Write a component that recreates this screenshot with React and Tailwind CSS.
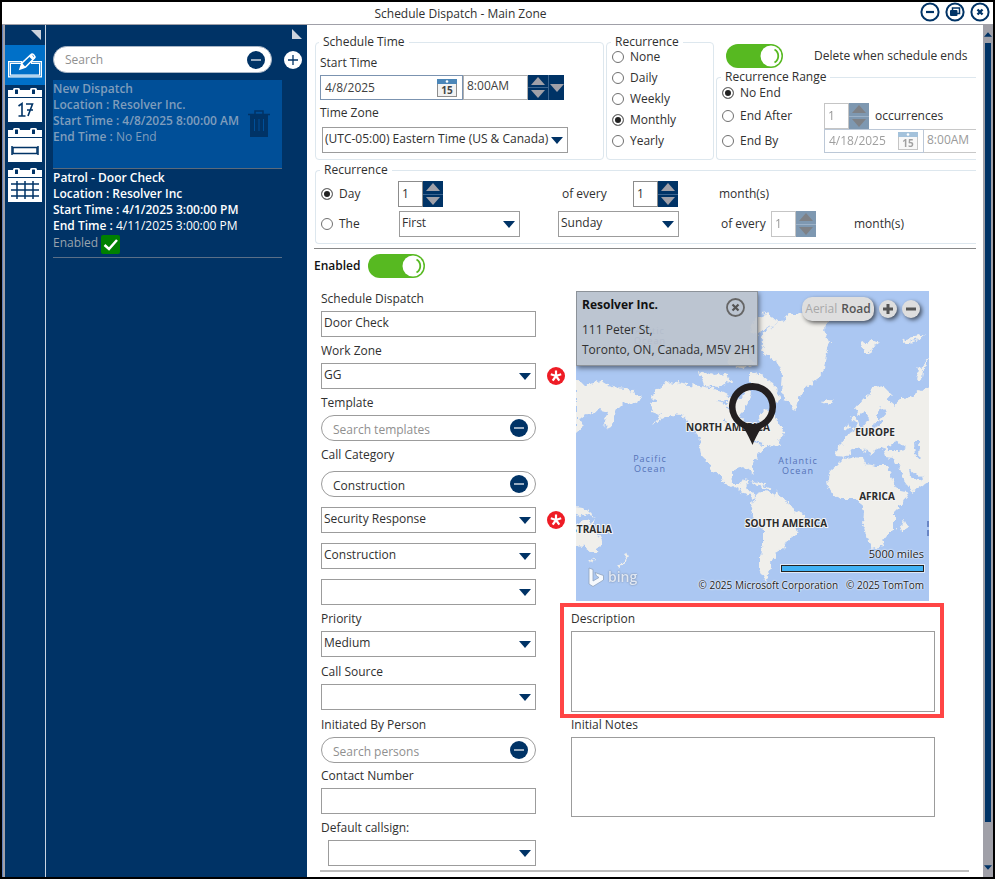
import React, { useId } from "react";

function Triangle({ dir = "down", className = "" }) {
  return (
    <svg viewBox="0 0 14 8" className={className} aria-hidden="true">
      <path d={dir === "down" ? "M0 0H14L7 8Z" : "M0 8H14L7 0Z"} fill="currentColor" />
    </svg>
  );
}

function Select({ label, id, value = "", className = "" }) {
  return (
    <div className={`relative h-[26px] ${className}`}>
      <select
        id={id}
        aria-label={label}
        defaultValue={value}
        className="h-full w-full appearance-none border border-[#9c9c9c] bg-white pr-[14px] pb-[3px] pl-[2px] text-[#303030] outline-none"
      >
        <option value={value}>{value}</option>
      </select>
      <Triangle className="pointer-events-none absolute top-[10px] right-[5px] h-[7px] w-[12px] text-[#003366]" />
    </div>
  );
}

function Spinner({ label, disabled = false }) {
  return (
    <div className={`flex h-[26px] w-[45px] shrink-0 ${disabled ? "opacity-50" : ""}`}>
      <input
        aria-label={label}
        defaultValue="1"
        disabled={disabled}
        className="w-[25px] border border-[#8c8c8c] bg-white pl-[3px] text-[#303030] outline-none"
      />
      <SpinButtons label={label} disabled={disabled} />
    </div>
  );
}

function SpinButtons({ label, disabled = false }) {
  const tone = disabled ? "bg-[#003366] text-[#a0a0a8]" : "bg-[#003366] text-[#a0a0a8]";
  const arrow = disabled ? "text-[#00060f]" : "text-[#a0a0a8]";
  return (
    <div className={`flex w-5 flex-col items-center ${tone}`}>
      <button type="button" disabled={disabled} aria-label={`Increase ${label}`} className="flex flex-1 items-center">
        <Triangle dir="up" className={`h-2 w-4 ${arrow}`} />
      </button>
      <span className="h-px w-full bg-[#3c6590]" />
      <button type="button" disabled={disabled} aria-label={`Decrease ${label}`} className="flex flex-1 items-center">
        <Triangle className={`h-2 w-4 ${arrow}`} />
      </button>
    </div>
  );
}

function CalendarGlyph() {
  return (
    <svg viewBox="0 0 20 18" className="h-[18px] w-5 shrink-0" aria-hidden="true">
      <rect x=".5" y=".5" width="19" height="17" fill="#f2f2f2" stroke="#8d8d8d" />
      <rect x="0" y="0" width="20" height="5" fill="#4b86b8" />
      <circle cx="10" cy="2.500" r="1.300" fill="#fff" />
      <text x="10" y="15" textAnchor="middle" fontFamily="Open Sans" fontWeight="700" fontSize="10" fill="#444">15</text>
    </svg>
  );
}

function DateBox({ label, value, disabled = false, className = "" }) {
  return (
    <div className={`flex items-center border border-[#7b93b0] bg-white pr-[5px] pl-1 ${disabled ? "opacity-50" : ""} ${className}`}>
      <input aria-label={label} defaultValue={value} disabled={disabled} className="w-0 min-w-0 flex-1 bg-transparent text-[#404040] outline-none" />
      <button type="button" disabled={disabled} aria-label={`Pick ${label}`}>
        <CalendarGlyph />
      </button>
    </div>
  );
}

function Radio({ name, label, checked = false, className = "" }) {
  return (
    <label className={`flex items-center gap-[6px] ${className}`}>
      <input
        type="radio"
        name={name}
        defaultChecked={checked}
        className="m-0 size-3 shrink-0 appearance-none rounded-full border border-[#707070] bg-white checked:bg-[#222222] checked:shadow-[inset_0_0_0_2px_#fff]"
      />
      {label}
    </label>
  );
}

function Toggle({ label }) {
  return (
    <button type="button" role="switch" aria-checked="true" aria-label={label} className="h-6 w-[57px] shrink-0">
      <svg viewBox="0 0 57 24" className="h-6 w-[57px]" aria-hidden="true">
        <rect width="57" height="24" rx="12" fill="#57b921" />
        <circle cx="45" cy="12" r="10.500" fill="#fff" />
        <path d="M48.500 5.500a7.500 7.500 0 0 1 0 13" fill="none" stroke="#57b921" strokeWidth="1.800" />
      </svg>
    </button>
  );
}

function MinusCircle({ label }) {
  return (
    <button type="button" aria-label={label} className="size-[18px] shrink-0">
      <svg viewBox="0 0 18 18" className="size-[18px]" aria-hidden="true">
        <circle cx="9" cy="9" r="9" fill="#003366" />
        <path d="M4 9H14" stroke="#fff" strokeWidth="1.200" />
      </svg>
    </button>
  );
}

function SearchPill({ id, value, placeholder, className = "" }) {
  return (
    <div className={`flex h-[26px] items-center rounded-full border border-[#9c9c9c] bg-white pr-[7px] pl-[11px] ${className}`}>
      <input
        id={id}
        defaultValue={value}
        placeholder={placeholder}
        className="min-w-0 flex-1 bg-transparent pt-[3px] text-[#303030] outline-none placeholder:text-[#8f8f8f]"
      />
      <MinusCircle label="Clear" />
    </div>
  );
}

function Required() {
  return (
    <svg viewBox="0 0 18 18" className="absolute top-1 left-full ml-[11px] size-[18px]" role="img" aria-label="Required">
      <circle cx="9" cy="9" r="9" fill="#ee1c25" />
      <path d="M9 9V3.500M9 9L14.200 7.300M9 9L12.300 13.600M9 9L5.700 13.600M9 9L3.800 7.300" stroke="#fff" strokeWidth="2.200" />
    </svg>
  );
}

function Field({ label, className = "", children }) {
  const id = useId();
  return (
    <div className={className}>
      <label htmlFor={id} className="block leading-4">{label}</label>
      {children(id)}
    </div>
  );
}

function NavButton({ label, active = false, children }) {
  return (
    <button
      type="button"
      aria-label={label}
      className={`flex h-10 w-full items-center justify-center ${active ? "bg-[#0070c8]" : ""}`}
    >
      {children}
    </button>
  );
}

function CalendarIcon({ children }) {
  return (
    <svg viewBox="0 0 34 34" className="size-[34px]" aria-hidden="true">
      <rect x="0" y="2" width="34" height="7" fill="#fff" />
      <rect x="5" y="0" width="7" height="8" rx="1.500" fill="#fff" />
      <rect x="7" y="1.500" width="3" height="4.500" rx=".5" fill="#003366" />
      <rect x="22" y="0" width="7" height="8" rx="1.500" fill="#fff" />
      <rect x="24" y="1.500" width="3" height="4.500" rx=".5" fill="#003366" />
      <rect x="0" y="10" width="34" height="24" fill="#fff" />
      {children}
    </svg>
  );
}

function NavRail() {
  return (
    <nav className="flex w-[41px] shrink-0 flex-col border-r border-[#c8d4e2] bg-[#003366]">
      <button type="button" aria-label="Collapse menu" className="flex h-5 items-center justify-end pr-1">
        <svg viewBox="0 0 10 10" className="size-[10px]"><path d="M0 0H10V10Z" fill="#ccd3dd" /></svg>
      </button>
      <NavButton label="Edit schedule" active>
        <svg viewBox="0 0 36 26" className="h-[26px] w-9" aria-hidden="true">
          <path d="M15 10.500H2.500V24H33.500V10.500H24" fill="none" stroke="#fff" strokeWidth="3" />
          <path d="M14 10.500H2.500V24H33.500V10.500H25" fill="none" stroke="#0070c8" strokeWidth=".6" />
          <path d="M13 17L15 11L24 2.500C25.500 1 29 4 27.500 6L18.500 15Z" fill="#0070c8" stroke="#fff" strokeWidth="1.500" />
          <path d="M13 17L15 11L18.500 15ZM22 4.500L25.500 8L27.500 6L24.500 2Z" fill="#fff" />
        </svg>
      </NavButton>
      <NavButton label="Day view">
        <CalendarIcon>
          <path d="M10.500 18L14 15.500V28M10.500 28H17.500M18 16H24.500L20 28M19 22H25" fill="none" stroke="#003366" strokeWidth="1.600" />
        </CalendarIcon>
      </NavButton>
      <NavButton label="Week view">
        <CalendarIcon>
          <rect x="5" y="19.500" width="24" height="6" fill="none" stroke="#003366" strokeWidth="1.500" />
          <path d="M4 18V27M30 18V27" stroke="#003366" strokeWidth="1.500" />
        </CalendarIcon>
      </NavButton>
      <NavButton label="Month view">
        <CalendarIcon>
          <path d="M3 16H31M3 22H31M3 28H31M9 13V31M17 13V31M25 13V31" stroke="#003366" strokeWidth="1.500" />
        </CalendarIcon>
      </NavButton>
    </nav>
  );
}

function ScheduleList() {
  return (
    <aside className="w-[261px] shrink-0 bg-[#003366] pr-[5px] pl-[7px] text-[12px] leading-4">
      <div className="flex h-[21px] justify-end pt-1">
        <svg viewBox="0 0 10 10" className="size-[10px]" aria-hidden="true"><path d="M0 0V10H10Z" fill="#ccd3dd" /></svg>
      </div>
      <div className="flex items-center gap-3">
        <div className="flex h-[27px] w-[220px] items-center rounded-full border border-[#a9b6c6] bg-white pr-[6px] pl-[11px]">
          <input aria-label="Search schedules" placeholder="Search" className="min-w-0 flex-1 bg-transparent outline-none placeholder:text-[#8f8f8f]" />
          <MinusCircle label="Clear search" />
        </div>
        <button type="button" aria-label="Add schedule">
          <svg viewBox="0 0 18 18" className="size-[18px]" aria-hidden="true">
            <circle cx="9" cy="9" r="9" fill="#fff" />
            <path d="M4 9H14M9 4V14" stroke="#003366" strokeWidth="1.300" />
          </svg>
        </button>
      </div>
      <ul className="mt-[7px] w-[229px]">
        <li className="flex h-[89px] border-b border-[#5a6a7c] bg-[#004f98] font-semibold text-[#7f9dbc]">
          <div className="w-[195px] shrink-0 whitespace-nowrap pt-px">
            <p>New Dispatch</p>
            <p>Location : Resolver Inc.</p>
            <p>Start Time : 4/8/2025 8:00:00 AM</p>
            <p>End Time : <span className="font-normal">No End</span></p>
          </div>
          <button type="button" aria-label="Delete dispatch" className="mt-[30px] h-[27px] w-[22px]">
            <svg viewBox="0 0 22 27" className="h-[27px] w-[22px]" aria-hidden="true">
              <path d="M0 4.500H22M7 4V1H15V4" fill="none" stroke="#003366" strokeWidth="1.500" />
              <path d="M2 4H20V27H2Z" fill="#003366" />
              <path d="M6.500 9V21M11 9V21M15.500 9V21" stroke="#004f98" strokeWidth="1" />
            </svg>
          </button>
        </li>
        <li className="h-[89px] border-b border-[#5a6f87] pt-px font-semibold whitespace-nowrap text-white">
          <p>Patrol - Door Check</p>
          <p>Location : Resolver Inc</p>
          <p>Start Time : 4/1/2025 3:00:00 PM</p>
          <p>End Time : <span className="font-normal">4/11/2025 3:00:00 PM</span></p>
          <p className="flex items-start gap-[3px] pt-px font-normal text-[#99a3ad]">
            Enabled
            <svg viewBox="0 0 19 19" className="size-[19px]" role="img" aria-label="Yes">
              <rect width="19" height="19" rx="2" fill="#008000" />
              <path d="M3.500 10L8 14L16 5" fill="none" stroke="#fff" strokeWidth="2.500" />
            </svg>
          </p>
        </li>
      </ul>
    </aside>
  );
}

const land = [
  "M0 90L10 94L26 90L36 96L50 97L65 105L61 113L48 112L42 118L36 130L31 140L28 132L32 120L24 118L12 124L2 128L8 134L0 141Z",
  "M74 114L80 111L76 104L83 95L95 91L112 94L124 95L138 98L150 104L160 108L170 104L171 96L176 104L173 110L168 118L164 124L168 131L177 135L182 144L184 134L183 124L190 117L197 124L204 134L209 143L202 149L205 155L196 154L187 158L182 164L178 170L175 176L178 184L173 180L168 176L159 179L155 185L157 193L164 193L167 188L173 189L170 196L175 202L181 204L177 207L169 203L160 198L150 193L144 184L138 180L131 171L125 163L123 154L124 147L118 139L114 131L104 124L96 123L86 128L76 134L84 124L76 121Z",
  "M181 204L187 200L196 201L207 208L215 214L218 219L229 223L228 231L222 235L219 245L212 250L207 258L200 262L201 267L194 271L196 276L190 285L192 291L188 288L184 279L184 264L187 252L187 239L179 230L174 219L177 210Z",
  "M187 62L188 52L184 47L192 38L202 32L214 24L240 22L254 30L248 38L254 52L250 64L248 78L241 88L229 98L223 108L220 119L214 115L208 105L205 94L206 83L200 70Z",
  "M181 24L190 22L202 32L190 38L182 44L174 40Z",
  "M123 80L138 84L150 82L155 90L143 97L128 95Z",
  "M174 80L186 84L198 94L204 105L200 113L192 108L186 98L174 94Z",
  "M150 60L172 64L180 73L164 78L152 74Z",
  "M246 110L252 107L257 110L252 115Z",
  "M353 95L344 99L335 106L326 107L318 114L312 109L316 104L307 95L298 97L287 108L279 118L282 124L290 119L293 127L288 134L280 138L272 143L269 149L264 155L260 158L261 165L270 166L275 159L282 156L288 162L290 157L296 165L299 160L306 157L309 166L318 167L322 175L329 190L337 201L348 193L358 186L358 95Z",
  "M254 180L261 174L266 169L277 166L286 167L290 173L300 175L311 175L315 186L323 200L332 201L326 213L318 221L318 238L310 246L304 256L297 258L291 247L287 233L288 220L285 212L278 208L266 208L258 205L252 197L251 188Z",
  "M324 242L322 235L329 230L331 234L327 243Z",
  "M276 139L280 135L276 125L281 128L284 136L281 141Z",
  "M269 137L273 131L275 138Z",
  "M-4 235L5 231L10 229L14 233L17 228L20 240L25 250L22 261L17 262L10 256L-4 255Z",
  "M-4 216L9 217L14 222L20 226L10 223L4 225L-4 222Z",
  "M14 267L18 268L16 272Z",
  "M51 261L53 266L44 277L41 276L49 269Z",
  "M286 52L296 49L303 52L297 56L293 65L288 62Z",
  "M340 89L342 78L353 68L346 80L345 90Z",
  "M326 49L334 47L350 43L344 48L330 52Z",
];

const waters = [
  "M301 124L305 116L310 121L303 129L307 132L297 137L296 134L302 131Z",
  "M311 156L321 150L330 156L323 160L312 160Z",
  "M338 151L344 151L342 162L345 168L339 165Z",
  "M314 177L318 184L327 199L323 199L317 190Z",
  "M333 177L342 185L348 186L342 190L334 184Z",
  "M312 201L316 201L316 207L312 206Z",
];

function WorldMap() {
  return (
    <svg viewBox="0 0 353 310" preserveAspectRatio="xMidYMid slice" className="h-full w-full" role="img" aria-label="World map">
      <defs>
        <filter id="coast" x="-5%" y="-5%" width="110%" height="110%">
          <feTurbulence type="fractalNoise" baseFrequency="0.18" numOctaves="3" seed="4" result="noise" />
          <feDisplacementMap in="SourceGraphic" in2="noise" scale="8" xChannelSelector="R" yChannelSelector="G" />
        </filter>
      </defs>
      <rect width="353" height="310" fill="#abc7f2" />
      <g filter="url(#coast)">
        {land.map((d) => <path key={d} d={d} fill="#f0efeb" />)}
        {waters.map((d) => <path key={d} d={d} fill="#abc7f2" />)}
        <path d="M177 191L188 195L194 198M200 200L202 206" stroke="#f0efeb" strokeWidth="2" fill="none" />
        <path d="M150 116L158 121M142 109L150 111M147 128L153 136M176 151L188 153" stroke="#abc7f2" strokeWidth="2" fill="none" />
      </g>
      <g fontFamily="Open Sans, Noto Sans, sans-serif" textAnchor="middle">
        <g fontSize="10" fontWeight="700" fill="#2b2b2b" stroke="#f4f4f4" strokeWidth="2" paintOrder="stroke" strokeLinejoin="round">
          <text x="152" y="140">NORTH AMERICA</text>
          <text x="299" y="145">EUROPE</text>
          <text x="301" y="209">AFRICA</text>
          <text x="210" y="236">SOUTH AMERICA</text>
          <text x="36" y="242" textAnchor="end">STRALIA</text>
        </g>
        <g fontSize="9" fill="#5573b8" letterSpacing="1">
          <text x="74" y="171">Pacific</text>
          <text x="74" y="181">Ocean</text>
          <text x="222" y="173">Atlantic</text>
          <text x="222" y="183">Ocean</text>
          <text x="74" y="43">Arctic</text>
          <text x="74" y="53">Ocean</text>
        </g>
      </g>
      <path d="M352 230V236M352 239V245" stroke="#5573b8" strokeWidth="1.500" />
      <path
        fillRule="evenodd"
        fill="#231f20"
        d="M176.500 92A23.500 23.500 0 0 1 186 137C183 140 180 146 176.500 154C173 146 170 140 167 137A23.500 23.500 0 0 1 176.500 92ZM176.500 99A17 17 0 1 0 176.500 133A17 17 0 1 0 176.500 99Z"
      />
    </svg>
  );
}

function MapPanel() {
  return (
    <section aria-label="Location map" className="relative mr-[6px] ml-[5px] h-[310px] overflow-hidden">
      <WorldMap />
      <div className="absolute top-0 left-0 h-[75px] w-[182px] border border-[#8c9299] bg-[#bec4cd]/90 pl-[5px] shadow-[1px_2px_5px_rgba(0,0,0,.5)]">
        <h2 className="mt-[5px] leading-4 font-bold text-[#111]">Resolver Inc.</h2>
        <p className="mt-[7px] leading-5 whitespace-nowrap">111 Peter St,<br />Toronto, ON, Canada, M5V 2H1</p>
        <button type="button" aria-label="Close" className="absolute top-[6px] right-[12px] size-[19px]">
          <svg viewBox="0 0 19 19" aria-hidden="true">
            <circle cx="9.500" cy="9.500" r="8.500" fill="none" stroke="#666" strokeWidth="1.800" />
            <path d="M6.500 6.500L12.500 12.500M12.500 6.500L6.500 12.500" stroke="#555" strokeWidth="2.200" />
          </svg>
        </button>
      </div>
      <div className="absolute top-[6px] right-[9px] flex items-center gap-[5px]">
        <div className="flex h-6 w-[72px] items-center justify-center gap-1 rounded-[10px] bg-[#dedede] shadow-[2px_2px_4px_rgba(0,0,0,.6)]">
          <button type="button" className="text-[#a8a8a8]">Aerial</button>
          <button type="button" className="font-semibold text-[#555]">Road</button>
        </div>
        {["M9 4V14M4 9H14", "M4 9H14"].map((d, i) => (
          <button key={d} type="button" aria-label={i ? "Zoom out" : "Zoom in"} className="size-[18px] rounded-full bg-[#dedede] shadow-[2px_2px_4px_rgba(0,0,0,.6)]">
            <svg viewBox="0 0 18 18" aria-hidden="true"><path d={d} stroke="#555" strokeWidth="3" /></svg>
          </button>
        ))}
      </div>
      <div className="absolute bottom-[14px] left-[12px] flex items-center gap-[3px] opacity-90">
        <svg viewBox="0 0 17 20" className="h-5 w-[17px]" aria-hidden="true">
          <path d="M1 1L5 2.500V14L11 10.500L8.500 9L7 5.500L15.500 8.500V13L5 19.500L1 17Z" fill="#fff" stroke="#8d9fb8" strokeWidth=".8" />
        </svg>
        <span className="text-[14px] leading-5 font-semibold text-[#e6ebf3] [text-shadow:0_0_2px_#60708a]">bing</span>
      </div>
      <div className="absolute right-[5px] bottom-[8px] flex flex-col items-end text-[#222] [text-shadow:0_0_2px_#fff,0_0_2px_#fff]">
        <span className="text-[11px] leading-4">5000 miles</span>
        <span className="mt-[3px] h-[7px] w-[143px] border border-[#222] bg-[#41b2f5] outline outline-[#dfe9f7]" />
        <span className="mt-[5px] flex gap-[8px] text-[10px] leading-4 whitespace-nowrap">
          <span>© 2025 Microsoft Corporation</span>
          <span>© 2025 TomTom</span>
        </span>
      </div>
    </section>
  );
}

const group = "min-w-0 rounded border border-[#dde7ee]";
const legend = "-ml-px h-4 px-1 leading-4";

function Timing() {
  return (
    <>
      <div className="flex gap-[2px] pl-px">
        <fieldset className={`${group} w-[289px] shrink-0 pb-[6px] pl-1`}>
          <legend className={legend}>Schedule Time</legend>
          <p className="mt-[5px] leading-4">Start Time</p>
          <div className="mt-1 flex h-[25px]">
            <DateBox label="start date" value="4/8/2025" className="w-[143px]" />
            <input aria-label="Start hour" defaultValue="8:00AM" className="w-[65px] border border-[#b0b0b0] pb-1 pl-[3px] text-[#404040] outline-none" />
            <SpinButtons label="start hour" />
            <button type="button" aria-label="Choose start hour" className="flex w-4 items-center justify-center border-l border-[#3c6590] bg-[#003366] text-[#a0a0a8]">
              <Triangle className="h-2 w-[14px]" />
            </button>
          </div>
          <label htmlFor="zone" className="mt-[5px] block leading-4">Time Zone</label>
          <Select id="zone" value="(UTC-05:00) Eastern Time (US & Canada)" className="mt-[6px] ml-[2px] w-[246px]" />
        </fieldset>
        <fieldset className={`${group} w-[108px] shrink-0 pl-[5px]`}>
          <legend className={legend}>Recurrence</legend>
          <div className="-mt-1">
            {["None", "Daily", "Weekly", "Monthly", "Yearly"].map((item) => (
              <Radio key={item} name="pattern" label={item} checked={item === "Monthly"} className="h-[21px]" />
            ))}
          </div>
        </fieldset>
        <div className="flex min-w-0 flex-1 flex-col">
          <div className="flex h-[35px] items-end gap-[31px] pb-px pl-[10px]">
            <Toggle label="Delete when schedule ends" />
            <span className="leading-6 whitespace-nowrap">Delete when schedule ends</span>
          </div>
          <fieldset className={`${group} flex-1 rounded-r-none border-r-0 pl-[5px]`}>
            <legend className={legend}>Recurrence Range</legend>
            <Radio name="range" label="No End" checked className="mb-[2px] h-4" />
            <div className="flex h-[26px] items-center">
              <Radio name="range" label="End After" className="w-[102px]" />
              <Spinner label="occurrences" disabled />
              <span className="ml-[6px]">occurrences</span>
            </div>
            <div className="flex h-6 items-center">
              <Radio name="range" label="End By" className="w-[102px] shrink-0" />
              <DateBox label="end date" value="4/18/2025" disabled className="h-6 w-[100px] shrink-0" />
              <input aria-label="End hour" defaultValue="8:00AM" disabled className="h-6 min-w-0 flex-1 border-y border-[#c8c8c8] pb-1 pl-[3px] text-[#9a9a9a]" />
            </div>
          </fieldset>
        </div>
      </div>
      <fieldset className={`${group} mt-[2px] ml-px rounded-r-none border-r-0 pb-[6px] pl-[5px]`}>
        <legend className={legend}>Recurrence</legend>
        <div className="mt-[3px] flex h-[26px] items-center">
          <Radio name="monthly" label="Day" checked className="w-[77px]" />
          <Spinner label="day" />
          <span className="ml-[119px] w-[71px]">of every</span>
          <Spinner label="months" />
          <span className="ml-[41px]">month(s)</span>
        </div>
        <div className="mt-1 flex h-[26px] items-center">
          <Radio name="monthly" label="The" className="w-[78px]" />
          <Select label="Week" value="First" className="w-[121px]" />
          <Select label="Weekday" value="Sunday" className="ml-[38px] w-[121px]" />
          <span className="ml-[42px] w-[50px]">of every</span>
          <Spinner label="month interval" disabled />
          <span className="ml-[38px]">month(s)</span>
        </div>
      </fieldset>
    </>
  );
}

function Details() {
  return (
    <div className="flex pr-[41px] pl-[7px]">
      <div className="w-[250px] shrink-0 pr-[35px]">
        <Field label="Schedule Dispatch">
          {(id) => <input id={id} defaultValue="Door Check" className="mt-1 block h-[26px] w-full border border-[#9c9c9c] pb-1 pl-[2px] text-[#303030] outline-none" />}
        </Field>
        <Field label="Work Zone" className="mt-[6px]">
          {(id) => <div className="relative mt-1"><Select id={id} value="GG" /><Required /></div>}
        </Field>
        <Field label="Template" className="mt-[6px]">
          {(id) => <SearchPill id={id} placeholder="Search templates" className="mt-1" />}
        </Field>
        <Field label="Call Category" className="mt-[6px]">
          {(id) => <SearchPill id={id} value="Construction" className="mt-2" />}
        </Field>
        <div className="mt-[10px] flex flex-col gap-[10px]">
          <div className="relative"><Select label="Category level 1" value="Security Response" /><Required /></div>
          <Select label="Category level 2" value="Construction" />
          <Select label="Category level 3" />
        </div>
        <Field label="Priority" className="mt-[6px]">
          {(id) => <Select id={id} value="Medium" className="mt-1" />}
        </Field>
        <Field label="Call Source" className="mt-[7px]">
          {(id) => <Select id={id} className="mt-1" />}
        </Field>
        <Field label="Initiated By Person" className="mt-[7px]">
          {(id) => <SearchPill id={id} placeholder="Search persons" className="mt-1" />}
        </Field>
        <Field label="Contact Number" className="mt-[5px]">
          {(id) => <input id={id} className="mt-1 block h-[26px] w-full border border-[#9c9c9c] px-1 outline-none" />}
        </Field>
        <Field label="Default callsign:" className="mt-[6px]">
          {(id) => <Select id={id} className="mt-1 ml-[7px]" />}
        </Field>
      </div>
      <div className="min-w-0 flex-1">
        <MapPanel />
        <div className="relative mt-[10px]">
          <Field label="Description">
            {(id) => <textarea id={id} className="mt-1 block h-[81px] w-full resize-none border border-[#9c9c9c] outline-none" />}
          </Field>
          <div className="pointer-events-none absolute -top-2 -right-[9px] -bottom-[6px] -left-[11px] border-4 border-[#ff4545]" />
        </div>
        <Field label="Initial Notes" className="mt-[5px]">
          {(id) => <textarea id={id} className="mt-1 block h-[80px] w-full resize-none border border-[#9c9c9c] outline-none" />}
        </Field>
      </div>
    </div>
  );
}

function TitleBar() {
  const icons = [
    ["Minimize", <path key="a" d="M6 10H14" stroke="#003366" strokeWidth="2.200" />],
    ["Restore", <g key="b"><rect x="7.500" y="6" width="7" height="5.500" fill="#fff" stroke="#003366" strokeWidth="1.500" /><rect x="5" y="8" width="7.500" height="6" rx="1" fill="#003366" /></g>],
    ["Close", <path key="c" d="M7.500 7.500L12.500 12.500M12.500 7.500L7.500 12.500" stroke="#003366" strokeWidth="2.400" />],
  ];
  return (
    <header className="grid h-[23px] grid-cols-[1fr_auto_1fr] items-center border-b border-[#a0a0a8]">
      <span />
      <h1 className="pr-[74px] leading-5">Schedule Dispatch - Main Zone</h1>
      <div className="flex justify-end gap-[5px] pr-[3px] pb-1">
        {icons.map(([name, shape]) => (
          <button key={name} type="button" aria-label={name} className="size-5">
            <svg viewBox="0 0 20 20" aria-hidden="true">
              <circle cx="10" cy="10" r="8.600" fill="#fff" stroke="#003366" strokeWidth="2" />
              {shape}
            </svg>
          </button>
        ))}
      </div>
    </header>
  );
}

export default function App() {
  return (
    <div className="flex min-h-screen flex-col border-2 border-black bg-white font-['Open_Sans','Noto_Sans',sans-serif] text-[12px] text-[#303030]">
      <TitleBar />
      <div className="flex flex-1 border-l border-[#5f80ba]">
        <div className="w-[2px] shrink-0 bg-[#a0a0a8]" />
        <NavRail />
        <ScheduleList />
        <main className="min-w-0 flex-1 pt-[9px] pr-[7px] pb-[5px] pl-[7px]">
          <Timing />
          <div className="mt-1 border-t border-[#888]" />
          <div className="mt-[5px] mb-[13px] flex h-6 items-center gap-2">
            <span className="font-semibold text-[#111]">Enabled</span>
            <Toggle label="Enabled" />
          </div>
          <Details />
          <div className="mt-1 mr-[7px] ml-[6px] h-[2px] bg-[#bdbdbd]" />
        </main>
        <div className="flex w-[10px] shrink-0 flex-col items-center bg-[#a0a0a8] py-[6px] text-[#003366]">
          <Triangle dir="up" className="h-[7px] w-2" />
          <div className="mt-[5px] mb-[42px] w-[6px] flex-1 bg-[#003366]" />
          <Triangle className="h-[7px] w-2" />
        </div>
      </div>
    </div>
  );
}
